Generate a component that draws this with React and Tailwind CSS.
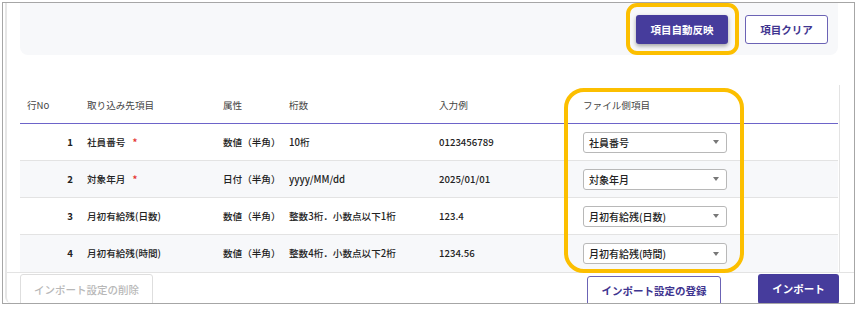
import React from "react";

const rows = [
  { no: 1, name: "社員番号", req: true, attr: "数値（半角）", digits: "10桁", ex: "0123456789", file: "社員番号", bg: "bg-white" },
  { no: 2, name: "対象年月", req: true, attr: "日付（半角）", digits: "yyyy/MM/dd", ex: "2025/01/01", file: "対象年月", bg: "bg-[#f7f8fa]" },
  { no: 3, name: "月初有給残(日数)", req: false, attr: "数値（半角）", digits: "整数3桁．小数点以下1桁", ex: "123.4", file: "月初有給残(日数)", bg: "bg-white" },
  { no: 4, name: "月初有給残(時間)", req: false, attr: "数値（半角）", digits: "整数4桁．小数点以下2桁", ex: "1234.56", file: "月初有給残(時間)", bg: "bg-[#f7f8fa]" },
];

const grid = "grid grid-cols-[60px_136px_66px_150px_144px_1fr] items-center";

export default function App() {
  return (
    <div className="w-[857px] h-[309px] bg-white pt-[2px] pl-[2px] font-['Noto_Sans_CJK_JP','Noto_Sans',sans-serif] text-[#222]">
      <div className="relative w-[853px] h-[302px] border border-[#a6a6a6] overflow-hidden pl-[2px]">
        <div className="h-full border-l-2 border-[#e6e6e6] rounded-bl-[6px] flex flex-col">
          <div className="pl-[13px]">
            <div className="w-[818px] h-[52px] rounded-b-[8px] bg-[#f7f8fa] flex justify-end items-start pt-[12px] pr-[10px] gap-[17px]">
              <button className="w-[92px] h-[29px] rounded-[3px] bg-[#463c9c] text-white text-[10.5px] font-bold shadow-[0_2px_4px_rgba(0,0,0,0.35)]">
                項目自動反映
              </button>
              <button className="w-[83px] h-[29px] rounded-[3px] border border-[#6b63b5] bg-white text-[#3f3590] text-[10.5px] font-bold">
                項目クリア
              </button>
            </div>
            <div className="w-[820px] mt-[30px] pt-[3px] border-r border-[#e3e3e3]">
              <div className={`${grid} w-[818px] h-[35px] text-[9.6px] text-[#444]`}>
                <div className="pl-[7px]">行No</div>
                <div className="pl-[7px]">取り込み先項目</div>
                <div className="pl-[7px]">属性</div>
                <div className="pl-[7px]">桁数</div>
                <div className="pl-[7px]">入力例</div>
                <div className="pl-[7px]">ファイル側項目</div>
              </div>
              <div className="w-[818px] h-px bg-[#6d64c9]" />
              {rows.map((r, i) => (
                <div
                  key={r.no}
                  className={`${grid} w-[818px] h-[37px] ${r.bg} ${i < 3 ? "border-b border-[#e3e3e3]" : ""} text-[9.6px] font-medium`}
                >
                  <div className="pr-[7px] text-right font-bold">{r.no}</div>
                  <div className="pl-[7px] flex items-center">
                    <span>{r.name}</span>
                    {r.req && <span className="ml-[7px] text-[#e53935] font-bold">*</span>}
                  </div>
                  <div className="pl-[7px]">{r.attr}</div>
                  <div className="pl-[7px]">{r.digits}</div>
                  <div className="pl-[7px]">{r.ex}</div>
                  <div className="pl-[7px]">
                    <div className="w-[144px] h-[21px] border border-[#b8b8b8] rounded-[3px] bg-white flex items-center justify-between pl-[5px] pr-[7px] text-[10px]">
                      <span>{r.file}</span>
                      <span className="w-0 h-0 border-l-[3.5px] border-r-[3.5px] border-t-[4px] border-l-transparent border-r-transparent border-t-[#777]" />
                    </div>
                  </div>
                </div>
              ))}
            </div>
          </div>
          <div className="border-t border-[#e3e3e3] pl-[13px] pt-[1px]">
            <div className="w-[819px] flex items-start">
              <button className="w-[133px] h-[32px] rounded-[3px] border border-[#dedede] bg-white text-[#b8b8b8] text-[10.5px] font-medium">
                インポート設定の削除
              </button>
              <button className="ml-auto mt-[2px] w-[134px] h-[30px] rounded-[3px] border border-[#6b63b5] bg-white text-[#3f3590] text-[10.5px] font-bold">
                インポート設定の登録
              </button>
              <button className="ml-[37px] w-[81px] h-[30px] rounded-[3px] bg-[#463c9c] text-white text-[10.5px] font-bold">
                インポート
              </button>
            </div>
          </div>
        </div>
        <div className="absolute left-[623px] top-[0px] w-[113px] h-[52px] border-[4px] border-[#fcbf00] rounded-[11px] pointer-events-none" />
        <div className="absolute left-[561px] top-[85px] w-[180px] h-[185px] border-[4px] border-[#fcbf00] rounded-[20px] pointer-events-none" />
      </div>
    </div>
  );
}
